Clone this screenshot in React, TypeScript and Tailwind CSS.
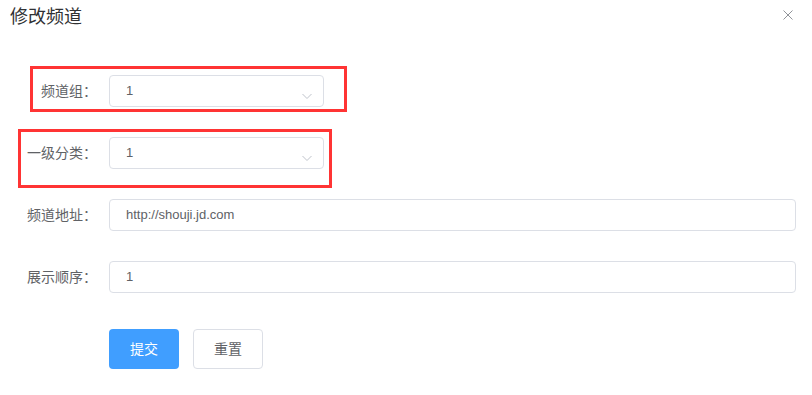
const fontStack = "font-['Liberation_Sans','Noto_Sans_CJK_SC',sans-serif]";

const Chevron = () => (
  <svg width="12" height="12" viewBox="0 0 12 12" className="text-[#c0c4cc]">
    <path d="M1.5 4 L6 8.5 L10.5 4" fill="none" stroke="currentColor" strokeWidth="1" />
  </svg>
);

const SelectRow = ({ label, value }: { label: string; value: string }) => (
  <div className="flex items-center h-8">
    <label className="w-[109px] pr-3 text-right text-[14px] text-[#606266]">{label}</label>
    <div className="w-[215px] h-8 border border-[#dcdfe6] rounded-[4px] flex items-center justify-between pl-4 pr-[10px]">
      <span className="text-[13px] text-[#606266]">{value}</span>
      <span className="pt-[10px]">
        <Chevron />
      </span>
    </div>
  </div>
);

const InputRow = ({ label, value }: { label: string; value: string }) => (
  <div className="flex items-center h-8">
    <label className="w-[109px] pr-3 text-right text-[14px] text-[#606266]">{label}</label>
    <div className="w-[687px] h-8 border border-[#dcdfe6] rounded-[4px] flex items-center pl-4">
      <span className="text-[13px] text-[#606266]">{value}</span>
    </div>
  </div>
);

export default function App() {
  return (
    <div className={`relative w-[812px] h-[395px] bg-white ${fontStack}`}>
      <div className="h-[75px] flex justify-between pl-[10px] pr-[19px] pt-[4px]">
        <h1 className="text-[18px] leading-[26px] text-[#303133]">修改频道</h1>
        <svg width="10" height="10" viewBox="0 0 10 10" className="mt-[6px] text-[#909399]">
          <path d="M0.5 0.5 L9.5 9.5 M9.5 0.5 L0.5 9.5" stroke="currentColor" strokeWidth="1" />
        </svg>
      </div>
      <form className="flex flex-col gap-[30px]">
        <SelectRow label="频道组：" value="1" />
        <SelectRow label="一级分类：" value="1" />
        <InputRow label="频道地址：" value="http://shouji.jd.com" />
        <InputRow label="展示顺序：" value="1" />
      </form>
      <div className="flex gap-[14px] pl-[109px] mt-[36px]">
        <button className="w-[70px] h-10 rounded-[4px] bg-[#409eff] text-white text-[14px]">提交</button>
        <button className="w-[70px] h-10 rounded-[4px] border border-[#dcdfe6] bg-white text-[#606266] text-[14px]">重置</button>
      </div>

      {/* annotation boxes */}
      <div className="absolute left-[30px] top-[66px] w-[317px] h-[46px] border-[3px] border-[#ff3434]" />
      <div className="absolute left-[18px] top-[129px] w-[314px] h-[59px] border-[3px] border-[#ff3434]" />
    </div>
  );
}
